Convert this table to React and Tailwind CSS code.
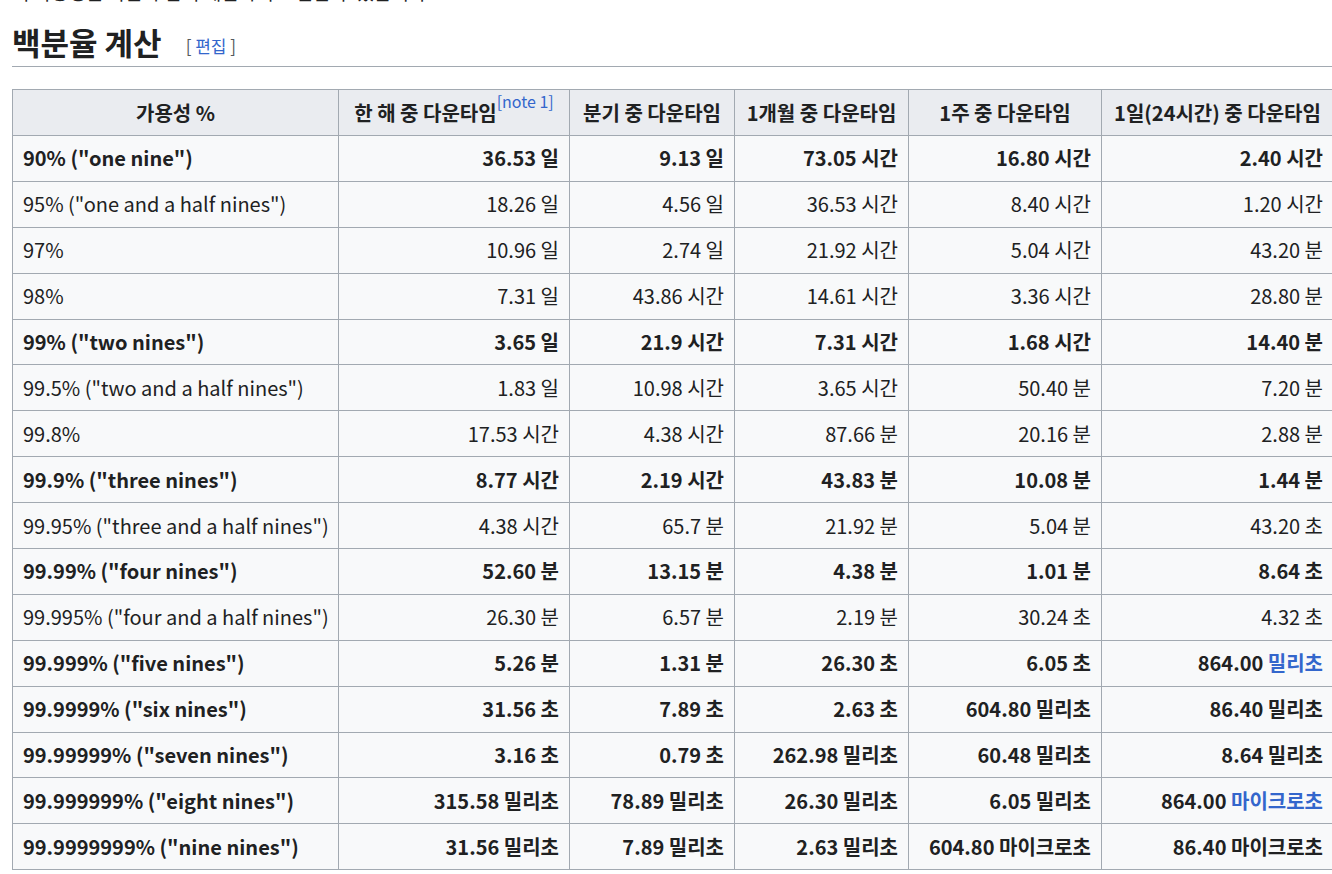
const rows = [
  { b: true, c: ['90% ("one nine")', "36.53 일", "9.13 일", "73.05 시간", "16.80 시간", "2.40 시간"] },
  { c: ['95% ("one and a half nines")', "18.26 일", "4.56 일", "36.53 시간", "8.40 시간", "1.20 시간"] },
  { c: ["97%", "10.96 일", "2.74 일", "21.92 시간", "5.04 시간", "43.20 분"] },
  { c: ["98%", "7.31 일", "43.86 시간", "14.61 시간", "3.36 시간", "28.80 분"] },
  { b: true, c: ['99% ("two nines")', "3.65 일", "21.9 시간", "7.31 시간", "1.68 시간", "14.40 분"] },
  { c: ['99.5% ("two and a half nines")', "1.83 일", "10.98 시간", "3.65 시간", "50.40 분", "7.20 분"] },
  { c: ["99.8%", "17.53 시간", "4.38 시간", "87.66 분", "20.16 분", "2.88 분"] },
  { b: true, c: ['99.9% ("three nines")', "8.77 시간", "2.19 시간", "43.83 분", "10.08 분", "1.44 분"] },
  { c: ['99.95% ("three and a half nines")', "4.38 시간", "65.7 분", "21.92 분", "5.04 분", "43.20 초"] },
  { b: true, c: ['99.99% ("four nines")', "52.60 분", "13.15 분", "4.38 분", "1.01 분", "8.64 초"] },
  { c: ['99.995% ("four and a half nines")', "26.30 분", "6.57 분", "2.19 분", "30.24 초", "4.32 초"] },
  { b: true, link: "밀리초", c: ['99.999% ("five nines")', "5.26 분", "1.31 분", "26.30 초", "6.05 초", "864.00"] },
  { b: true, c: ['99.9999% ("six nines")', "31.56 초", "7.89 초", "2.63 초", "604.80 밀리초", "86.40 밀리초"] },
  { b: true, c: ['99.99999% ("seven nines")', "3.16 초", "0.79 초", "262.98 밀리초", "60.48 밀리초", "8.64 밀리초"] },
  { b: true, link: "마이크로초", c: ['99.999999% ("eight nines")', "315.58 밀리초", "78.89 밀리초", "26.30 밀리초", "6.05 밀리초", "864.00"] },
  { b: true, c: ['99.9999999% ("nine nines")', "31.56 밀리초", "7.89 밀리초", "2.63 밀리초", "604.80 마이크로초", "86.40 마이크로초"] },
];

const headers = ["가용성 %", "한 해 중 다운타임", "분기 중 다운타임", "1개월 중 다운타임", "1주 중 다운타임", "1일(24시간) 중 다운타임"];

export default function App() {
  return (
    <div
      className="w-[1332px] h-[874px] overflow-hidden bg-white text-[#202122]"
      style={{ fontFamily: '"Noto Sans CJK KR", "Noto Sans", sans-serif' }}
    >
      {/* 잘린 윗줄 */}
      <p className="-mt-[20px] pl-[12px] text-[19px] leading-[24px] whitespace-nowrap">
        이 가용성은 다음과 같이 계산하여 표현할 수 있습니다.
      </p>

      {/* 제목 */}
      <div className="ml-[12px] mt-[18px] flex items-baseline border-b border-[#a2a9b1] pb-[4px]">
        <h2 className="text-[31px] font-bold leading-[40px]">백분율 계산</h2>
        <span className="ml-[24px] relative -top-[2px] text-[17px] text-[#54595d]">
          [ <a className="text-[#3366cc]">편집</a> ]
        </span>
      </div>

      {/* 표 */}
      <table className="ml-[12px] mt-[22px] w-[1321px] table-fixed border-collapse bg-[#f8f9fa] text-[20px] leading-[24px]">
        <colgroup>
          <col className="w-[326px]" />
          <col className="w-[231px]" />
          <col className="w-[165px]" />
          <col className="w-[174px]" />
          <col className="w-[193px]" />
          <col className="w-[232px]" />
        </colgroup>
        <thead>
          <tr>
            {headers.map((h, i) => (
              <th
                key={h}
                className="h-[46px] border border-[#a2a9b1] bg-[#eaecf0] px-[10px] text-center font-bold whitespace-nowrap"
              >
                {h}
                {i === 1 && (
                  <sup className="text-[16px] font-normal text-[#3366cc] align-[5px]">[note 1]</sup>
                )}
              </th>
            ))}
          </tr>
        </thead>
        <tbody>
          {rows.map((r) => (
            <tr key={r.c[0]} className={r.b ? "font-bold" : "font-normal"}>
              {r.c.map((v, i) => (
                <td
                  key={i}
                  className={`h-[45.9px] border border-[#a2a9b1] px-[10px] whitespace-nowrap ${
                    i === 0 ? "text-left" : "text-right"
                  }`}
                >
                  {v}
                  {i === 5 && r.link && (
                    <>
                      {" "}
                      <a className="text-[#3366cc]">{r.link}</a>
                    </>
                  )}
                </td>
              ))}
            </tr>
          ))}
        </tbody>
      </table>
    </div>
  );
}
